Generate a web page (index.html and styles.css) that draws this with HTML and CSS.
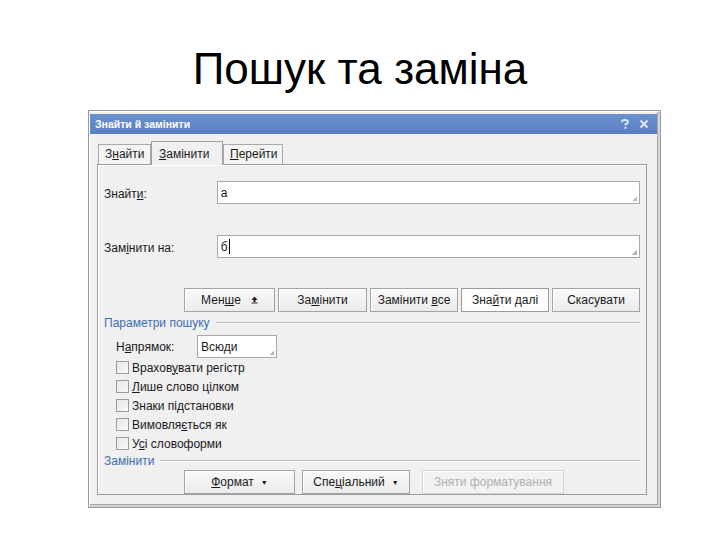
FILE: index.html
```html
<!DOCTYPE html>
<html lang="uk">
<head>
<meta charset="utf-8">
<title>Пошук та заміна</title>
<link rel="stylesheet" href="styles.css">
</head>
<body>
<div class="slide">
  <h1 class="slide-title">Пошук та заміна</h1>
  <div class="dialog">
    <div class="titlebar">
      <span class="titlebar-text">Знайти й замінити</span>
      <span class="titlebar-icons">
        <svg width="12" height="10" viewBox="0 0 12 10"><path d="M3 3.2 Q3 1 6 1 Q9 1 9 3 Q9 4.5 6.5 5 L6.5 6.5" fill="none" stroke="#dfe6f3" stroke-width="1.8"/><rect x="5.5" y="7.8" width="2" height="2" fill="#dfe6f3"/></svg>
        <svg width="10" height="10" viewBox="0 0 10 10"><path d="M1.5 1.5 L8.5 8.5 M8.5 1.5 L1.5 8.5" stroke="#dfe6f3" stroke-width="2"/></svg>
      </span>
    </div>
    <div class="tabs">
      <div class="tab">З<u>н</u>айти</div>
      <div class="tab tab-active"><u>З</u>амінити</div>
      <div class="tab"><u>П</u>ерейти</div>
    </div>
    <div class="panel">
      <div class="field-row first">
        <div class="field-label">Знайт<u>и</u>:</div>
        <div class="input"><span>а</span><i class="grip"></i></div>
      </div>
      <div class="field-row second">
        <div class="field-label">Зам<u>і</u>нити на:</div>
        <div class="input"><span>б</span><b class="caret"></b><i class="grip"></i></div>
      </div>
      <div class="btn-row">
        <div class="btn w91"><span>Мен<u>ш</u>е</span><svg class="less-icon" width="7" height="8" viewBox="0 0 7 8"><path d="M3.5 0.5 L6.5 4 L0.5 4 Z" fill="#222"/><rect x="2.5" y="4" width="2" height="2" fill="#222"/><rect x="0.5" y="6.5" width="6" height="1" fill="#222"/></svg></div>
        <div class="btn w89"><span>За<u>м</u>інити</span></div>
        <div class="btn w88"><span>Замінити <u>в</u>се</span></div>
        <div class="btn w88 btn-default"><span>Зна<u>й</u>ти далі</span></div>
        <div class="btn w88"><span>Скасувати</span></div>
      </div>
      <div class="legend legend-1"><span>Параметри пошуку</span><i class="legend-line"></i></div>
      <div class="dir-row">
        <div class="dir-label">Н<u>а</u>прямок:</div>
        <div class="select"><span>Всюди</span><i class="grip"></i></div>
      </div>
      <div class="checks">
        <div class="check"><i class="box"></i><span>Врахов<u>у</u>вати регістр</span></div>
        <div class="check"><i class="box"></i><span><u>Л</u>ише слово цілком</span></div>
        <div class="check"><i class="box"></i><span>Знаки пі<u>д</u>становки</span></div>
        <div class="check"><i class="box"></i><span>Вимовля<u>є</u>ться як</span></div>
        <div class="check"><i class="box"></i><span>У<u>с</u>і словоформи</span></div>
      </div>
      <div class="legend legend-2"><span>Замінити</span><i class="legend-line"></i></div>
      <div class="btn-row2">
        <div class="btn w111"><span><u>Ф</u>ормат</span><span class="arrow">▼</span></div>
        <div class="btn w108"><span>Спе<u>ц</u>іальний</span><span class="arrow">▼</span></div>
        <div class="btn w142 btn-disabled"><span>Зняти форматування</span></div>
      </div>
    </div>
  </div>
</div>
</body>
</html>
```
FILE: styles.css
```css
* { box-sizing: border-box; }
html, body { margin: 0; padding: 0; background: #fff; }
.slide {
  width: 720px;
  height: 540px;
  overflow: hidden;
  font-family: "Liberation Sans", Arial, sans-serif;
  display: flex;
  flex-direction: column;
}
.slide-title {
  margin: 44px 0 0 0;
  height: 66px;
  font-weight: normal;
  font-size: 44px;
  line-height: 50px;
  text-align: center;
  color: #000;
}
.dialog {
  margin-left: 88px;
  width: 573px;
  height: 398px;
  background: #f0f0f0;
  border: 1px solid #9a9a9a;
  box-shadow: inset 1px 1px 0 #fff, inset -2px -2px 0 #d4d4d4, inset -3px -3px 0 #a8a8a8;
  padding: 3px 3px 0 1px;
  display: flex;
  flex-direction: column;
  font-size: 12px;
  color: #1a1a1a;
}
.titlebar {
  height: 20px;
  background: linear-gradient(#6b90cf, #5a80c2);
  display: flex;
  align-items: center;
  justify-content: space-between;
  padding: 0 8px 0 5px;
}
.titlebar-text {
  color: #fff;
  font-weight: bold;
  font-size: 10.5px;
}
.titlebar-icons { display: flex; gap: 8px; align-items: center; }
.tabs {
  display: flex;
  margin: 6px 0 0 8px;
  height: 24px;
  align-items: flex-end;
  position: relative;
  z-index: 1;
}
.tab {
  height: 20px;
  padding: 0 6px;
  border: 1px solid #a9a9a9;
  border-bottom: none;
  background: #f4f4f4;
  line-height: 19px;
}
.tab:first-child { width: 53px; }
.tab-active {
  height: 24px;
  width: 72px;
  background: #f0f0f0;
  border-color: #a0a0a0;
  line-height: 25px;
  margin-bottom: -1px;
  padding-left: 7px;
}
.tab:last-child { width: 60px; }
.panel {
  margin-left: 7px;
  width: 550px;
  height: 331px;
  border: 1px solid #9c9c9c;
  box-shadow: inset 1px 1px 0 #fff;
  padding: 0 6px;
  display: flex;
  flex-direction: column;
}
.field-row { display: flex; align-items: center; height: 23px; }
.field-row.first { margin-top: 16px; }
.field-row.second { margin-top: 31px; }
.field-label { width: 113px; padding-top: 2px; }
.input {
  width: 424px;
  height: 23px;
  background: #fff;
  border: 1px solid #a8a8a8;
  position: relative;
  display: flex;
  align-items: center;
  padding-left: 3px;
}
.caret { display: inline-block; width: 1px; height: 15px; background: #000; margin-left: 1px; }
.grip {
  position: absolute;
  right: 2px;
  bottom: 2px;
  width: 5px;
  height: 5px;
  background: linear-gradient(135deg, transparent 50%, #b8b8b8 50%);
}
.btn-row {
  margin-top: 30px;
  display: flex;
  justify-content: flex-end;
  gap: 3px;
}
.btn {
  height: 24px;
  border: 1px solid #a3a3a3;
  background: linear-gradient(#fafafa, #ebebeb);
  box-shadow: inset 1px 1px 0 #fff;
  display: flex;
  align-items: center;
  justify-content: center;
  color: #1a1a1a;
}
.btn-default { background: #fdfdfd; border-color: #9a9a9a; }
.w91 { width: 91px; }
.w89 { width: 89px; }
.w88 { width: 88px; }
.w111 { width: 111px; }
.w108 { width: 108px; }
.w142 { width: 142px; }
.less-icon { margin-left: 10px; }
.legend {
  display: flex;
  align-items: center;
  color: #3e6db3;
  height: 14px;
}
.legend-1 { margin-top: 4px; }
.legend-2 { margin-top: 1px; }
.legend span { margin-right: 6px; }
.legend-line { flex: 1; height: 2px; border-top: 1px solid #b8b8b8; border-bottom: 1px solid #fff; }
.dir-row { display: flex; align-items: center; margin-top: 5px; height: 23px; padding-left: 12px; }
.dir-label { width: 81px; }
.select {
  width: 80px;
  height: 23px;
  background: #fff;
  border: 1px solid #a8a8a8;
  position: relative;
  display: flex;
  align-items: center;
  padding-left: 3px;
}
.checks { display: flex; flex-direction: column; padding-left: 12px; }
.check { height: 19px; display: flex; align-items: center; }
.box {
  width: 13px;
  height: 13px;
  border: 1px solid #9c9c9c;
  background: linear-gradient(135deg, #e6e6e6, #fafafa);
  margin-right: 3px;
}
.btn-row2 { margin-top: 2px; display: flex; padding-left: 80px; gap: 7px; }
.btn-row2 .btn-disabled { margin-left: 5px; color: #b0b0b0; border-color: #d4d4d4; background: #f2f2f2; }
.arrow { font-size: 7px; margin-left: 7px; }
u { text-decoration: underline; text-underline-offset: 1px; }
```
